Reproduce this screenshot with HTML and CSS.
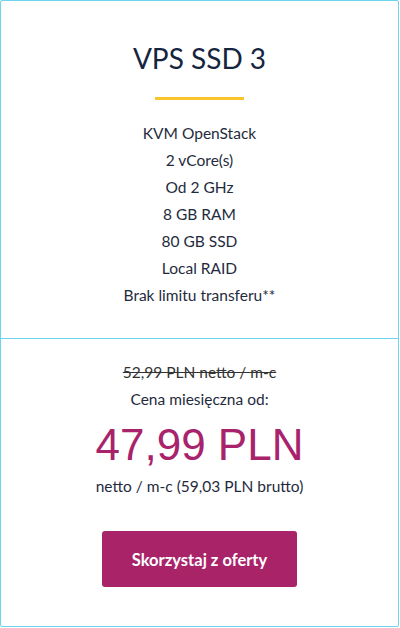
FILE: index.html
```html
<!DOCTYPE html>
<html lang="pl">
<head>
<meta charset="utf-8">
<link rel="stylesheet" href="styles.css">
</head>
<body>
<div class="card">
  <div class="top">
    <h2 class="title">VPS SSD 3</h2>
    <div class="bar"></div>
    <ul class="features">
      <li>KVM OpenStack</li>
      <li>2 vCore(s)</li>
      <li>Od 2 GHz</li>
      <li>8 GB RAM</li>
      <li>80 GB SSD</li>
      <li>Local RAID</li>
      <li>Brak limitu transferu**</li>
    </ul>
  </div>
  <div class="bottom">
    <div class="old">52,99 PLN netto / m-c</div>
    <div class="label">Cena miesięczna od:</div>
    <div class="price">47,99 PLN</div>
    <div class="net">netto / m-c (59,03 PLN brutto)</div>
    <a class="btn" href="#">Skorzystaj z oferty</a>
  </div>
</div>
</body>
</html>
```
FILE: styles.css
```css
html, body {
  margin: 0;
  padding: 0;
  background: #fff;
}
body {
  width: 400px;
  height: 628px;
  font-family: "Lato", "Liberation Sans", sans-serif;
  color: #1f2b3d;
}
.card {
  box-sizing: border-box;
  width: 399px;
  height: 627px;
  border: 1px solid #6cd4ec;
  border-radius: 2px;
  display: flex;
  flex-direction: column;
  text-align: center;
}
.top {
  padding-top: 37px;
  padding-bottom: 29px;
  border-bottom: 1px solid #6cd4ec;
  display: flex;
  flex-direction: column;
  align-items: center;
}
.title {
  margin: 0;
  font-weight: 400;
  font-size: 28px;
  line-height: 40px;
  color: #15243f;
}
.bar {
  width: 89px;
  height: 3px;
  background: #f9c52a;
  margin-top: 19px;
}
.features {
  list-style: none;
  margin: 20px 0 0;
  padding: 0;
  font-size: 15.5px;
  line-height: 27px;
}
.bottom {
  padding-top: 20px;
  display: flex;
  flex-direction: column;
  align-items: center;
  font-size: 15.5px;
  line-height: 27px;
}
.old {
  text-decoration: line-through;
  color: #333;
}
.price {
  font-family: "Liberation Sans", sans-serif;
  font-size: 44px;
  line-height: 54px;
  color: #a8236b;
  margin-top: 5px;
}
.net {
  margin-top: 1px;
}
.btn {
  margin-top: 31px;
  width: 195px;
  height: 56px;
  box-sizing: border-box;
  padding-top: 2px;
  display: flex;
  align-items: center;
  justify-content: center;
  background: #a92369;
  color: #fff;
  border-radius: 3px;
  text-decoration: none;
  font-weight: 700;
  font-size: 16.5px;
}
```
